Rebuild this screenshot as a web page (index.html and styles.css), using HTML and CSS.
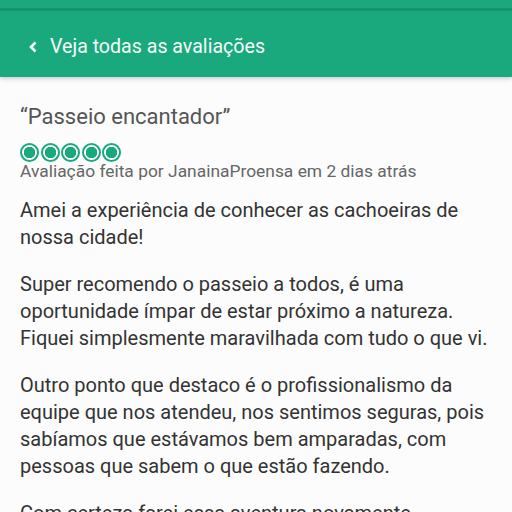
FILE: index.html
```html
<!DOCTYPE html>
<html lang="pt">
<head>
<meta charset="utf-8">
<link rel="stylesheet" href="styles.css">
</head>
<body>
<div class="status"></div>
<header class="bar">
  <svg class="chev" width="10" height="12" viewBox="0 0 10 12"><path d="M7.5 1.5 L3 6 L7.5 10.5" fill="none" stroke="#fff" stroke-width="2.6"/></svg>
  <span class="bar-title">Veja todas as avaliações</span>
</header>
<main class="review">
  <h1 class="title">“Passeio encantador”</h1>
  <div class="bubbles">
    <span class="bubble"></span><span class="bubble"></span><span class="bubble"></span><span class="bubble"></span><span class="bubble"></span>
  </div>
  <div class="meta">Avaliação feita por JanainaProensa em 2 dias atrás</div>
  <p>Amei a experiência de conhecer as cachoeiras de nossa cidade!</p>
  <p>Super recomendo o passeio a todos, é uma oportunidade ímpar de estar próximo a natureza. Fiquei simplesmente maravilhada com tudo o que vi.</p>
  <p>Outro ponto que destaco é o profissionalismo da equipe que nos atendeu, nos sentimos seguras, pois sabíamos que estávamos bem amparadas, com pessoas que sabem o que estão fazendo.</p>
  <p>Com certeza farei essa aventura novamente.</p>
</main>
</body>
</html>
```
FILE: styles.css
```css
html, body { margin: 0; padding: 0; }
body {
  background: #fcfcfc;
  font-family: Roboto, "Liberation Sans", sans-serif;
  width: 512px;
  height: 512px;
  overflow: hidden;
}
.status {
  height: 8px;
  background: #1aa87c;
  border-bottom: 3px solid #15966f;
}
.bar {
  height: 66px;
  box-sizing: border-box;
  padding: 5px 0 0 28px;
  background: #1aa97d;
  display: flex;
  align-items: center;
  box-shadow: 0 2px 4px rgba(0,0,0,0.18);
}
.chev { margin-right: 12px; margin-top: 1px; }
.bar-title {
  color: #f4fbf8;
  font-size: 19.6px;
}
.review {
  padding: 0 20px;
}
.title {
  margin: 26px 0 0;
  font-size: 22px;
  font-weight: 400;
  color: #555;
  line-height: 28px;
}
.bubbles {
  display: flex;
  gap: 1.5px;
  margin-top: 12px;
}
.bubble {
  width: 15px;
  height: 15px;
  border: 2px solid #1aa97d;
  border-radius: 50%;
  background: radial-gradient(circle, #1aa97d 0 5.5px, #fff 6px);
  box-sizing: content-box;
}
.meta {
  font-size: 17.4px;
  color: #666;
  line-height: 18px;
  margin-top: 0;
}
p {
  margin: 17px 0 0;
  font-size: 20px;
  line-height: 27px;
  color: #333;
}
p + p { margin-top: 20px; }
```
